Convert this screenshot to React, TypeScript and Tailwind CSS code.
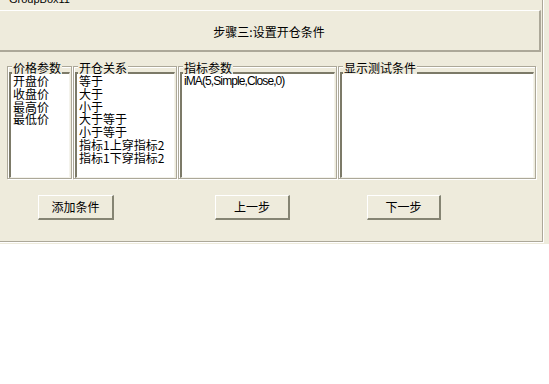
import React from "react";

const cjk = "font-['Noto_Sans_CJK_SC','Noto_Sans',sans-serif]";
const latin = "font-['Liberation_Sans','Noto_Sans_CJK_SC',sans-serif]";
const dither = "bg-[#eeebdc]";

function GroupBox({
  label,
  width,
  children,
}: {
  label: string;
  width: string;
  children?: React.ReactNode;
}) {
  return (
    <div
      className={`relative ${width} h-[113px] border border-[#aca899] shadow-[inset_1px_1px_0_#ffffff,1px_1px_0_#ffffff] flex flex-col px-[1px] pt-[5px]`}
    >
      <div
        className={`absolute left-[4px] top-[-5px] px-[1px] ${dither} text-[12px] leading-[12px] text-black ${cjk}`}
      >
        {label}
      </div>
      <div className="flex-1 bg-white border-t-2 border-l-2 border-t-[#7c7a68] border-l-[#7c7a68] border-r border-b border-r-[#f4f3ec] border-b-[#f4f3ec] pl-[2px] pt-[1px] overflow-hidden">
        {children}
      </div>
    </div>
  );
}

function Item({ children, latinFont }: { children: React.ReactNode; latinFont?: boolean }) {
  return (
    <div
      className={`h-[12.75px] leading-[12.75px] text-black whitespace-nowrap ${
        latinFont ? `${latin} text-[12px] tracking-[-0.9px]` : `${cjk} text-[12px]`
      }`}
    >
      {children}
    </div>
  );
}

function Button({ label, width }: { label: string; width: string }) {
  return (
    <div
      className={`${width} h-[25px] flex items-center justify-center border-t border-l border-t-white border-l-white border-r-2 border-b-2 border-r-[#858473] border-b-[#858473] text-[12px] text-black ${cjk}`}
    >
      {label}
    </div>
  );
}

export default function App() {
  return (
    <div className="w-[549px] h-[384px] bg-white overflow-hidden">
      <div className={`h-[244px] ${dither} overflow-hidden`}>
        <div className="relative -ml-[2px] -mt-[2px] w-[545px] h-[244px] border border-[#aca899] shadow-[inset_1px_1px_0_#ffffff,1px_1px_0_#ffffff] pt-[11px] flex flex-col">
          <div
            className={`absolute left-[9px] top-[-6px] px-[1px] ${dither} text-[11px] leading-[13px] text-black ${latin}`}
          >
            GroupBox11
          </div>

          <div
            className={`w-[542px] h-[42px] border-t border-t-white border-r-2 border-r-[#aca899] border-b-2 border-b-[#aca899] flex items-center justify-center pt-[2px] text-[12px] text-black ${cjk}`}
          >
            步骤三:设置开仓条件
          </div>

          <div className="mt-[14px] ml-[8px] flex gap-[1px]">
            <GroupBox label="价格参数" width="w-[65px]">
              <Item>开盘价</Item>
              <Item>收盘价</Item>
              <Item>最高价</Item>
              <Item>最低价</Item>
            </GroupBox>
            <GroupBox label="开仓关系" width="w-[104px]">
              <Item>等于</Item>
              <Item>大于</Item>
              <Item>小于</Item>
              <Item>大于等于</Item>
              <Item>小于等于</Item>
              <Item>指标1上穿指标2</Item>
              <Item>指标1下穿指标2</Item>
            </GroupBox>
            <GroupBox label="指标参数" width="w-[159px]">
              <Item latinFont>iMA(5,Simple,Close,0)</Item>
            </GroupBox>
            <GroupBox label="显示测试条件" width="w-[198px]" />
          </div>

          <div className="mt-[16px] ml-[39px] flex">
            <Button label="添加条件" width="w-[76px]" />
            <div className="w-[101px]" />
            <Button label="上一步" width="w-[75px]" />
            <div className="w-[77px]" />
            <Button label="下一步" width="w-[74px]" />
          </div>
        </div>
      </div>
    </div>
  );
}
